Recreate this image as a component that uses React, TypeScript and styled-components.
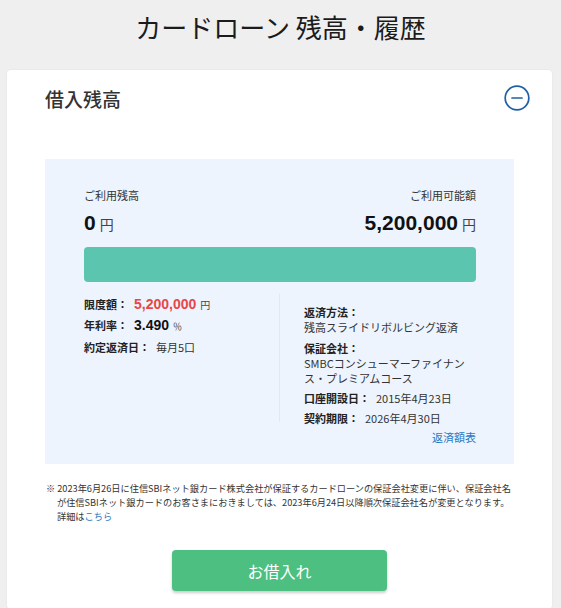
import styled, { createGlobalStyle } from "styled-components";

const GlobalStyle = createGlobalStyle`
  html, body {
    margin: 0;
    padding: 0;
    background: #efefef;
    font-family: "Noto Sans CJK JP", "Noto Sans", sans-serif;
    color: #222;
  }
`;

const Page = styled.div`
  width: 561px;
  min-height: 608px;
`;

const Title = styled.h1`
  margin: 0;
  padding-top: 9px;
  height: 36px;
  line-height: 36px;
  text-align: center;
  font-size: 26px;
  font-weight: 400;
  color: #1b1b1b;
  margin-bottom: 25px;
`;

const Card = styled.section`
  margin: 0 9px 0 7px;
  background: #fff;
  border-radius: 4px;
  box-shadow: 0 0 2px rgba(0, 0, 0, 0.08);
  padding: 0 38px 18px;
`;

const CardHeader = styled.div`
  display: flex;
  align-items: center;
  justify-content: space-between;
  height: 56px;
  margin-right: -16px;
`;

const CardTitle = styled.h2`
  margin: 0;
  font-size: 19px;
  font-weight: 500;
  color: #333;
`;

const ToggleButton = styled.button`
  border: 0;
  background: none;
  padding: 0;
  width: 26px;
  height: 26px;
  cursor: pointer;
  display: flex;
`;

const Panel = styled.div`
  margin-top: 33px;
  background: #edf4fe;
  padding: 28px 38px 20px 39px;
`;

const SummaryRow = styled.div`
  display: flex;
  justify-content: space-between;
`;

const SummaryBlock = styled.div<{ $right?: boolean }>`
  display: flex;
  flex-direction: column;
  align-items: ${(p) => (p.$right ? "flex-end" : "flex-start")};
`;

const SummaryLabel = styled.div`
  font-size: 11px;
  line-height: 16px;
  color: #333;
`;

const Amount = styled.div`
  margin-top: 6px;
  height: 28px;
  display: flex;
  align-items: baseline;
  line-height: 28px;
`;

const Number = styled.span<{ $size: number; $color?: string }>`
  font-family: "Liberation Sans", Arial, sans-serif;
  font-weight: 700;
  font-size: ${(p) => p.$size}px;
  color: ${(p) => p.$color || "#111"};
`;

const Unit = styled.span<{ $size: number }>`
  font-size: ${(p) => p.$size}px;
  color: #444;
  margin-left: 4px;
`;

const Bar = styled.div`
  margin-top: 10px;
  height: 35px;
  border-radius: 4px;
  background: #5bc5b0;
`;

const Details = styled.div`
  display: flex;
  margin-top: 12px;
`;

const LeftCol = styled.div`
  width: 195px;
  height: 128px;
  border-right: 1px solid #e3e8f0;
  display: flex;
  flex-direction: column;
`;

const RightCol = styled.div`
  flex: 1;
  padding-left: 24px;
  padding-top: 11px;
  display: flex;
  flex-direction: column;
`;

const InlineRow = styled.div<{ $gap?: number }>`
  display: flex;
  align-items: baseline;
  line-height: 20px;
  font-size: 11px;
  margin-top: ${(p) => p.$gap || 0}px;
`;

const Label = styled.span`
  font-weight: 700;
  font-size: 11px;
  color: #222;
  margin-right: 6px;
  white-space: nowrap;
`;

const Value = styled.span`
  font-size: 11px;
  color: #333;
`;

const StackItem = styled.div`
  display: flex;
  flex-direction: column;
  line-height: 15px;
  font-size: 11px;
  margin-bottom: 6px;
`;

const StackValue = styled.span`
  font-size: 11px;
  color: #333;
`;

const TableLink = styled.a`
  align-self: flex-end;
  margin-top: 2px;
  line-height: 14px;
  font-size: 11px;
  color: #2a79c1;
  text-decoration: none;
`;

const Note = styled.p`
  margin: 17px -2px 0 1px;
  padding-left: 11px;
  text-indent: -11px;
  font-size: 9.2px;
  line-height: 14px;
  color: #333;
`;

const NoteLink = styled.a`
  color: #2a79c1;
  text-decoration: none;
`;

const ButtonWrap = styled.div`
  display: flex;
  justify-content: center;
  margin-top: 27px;
`;

const PrimaryButton = styled.button`
  width: 215px;
  height: 41px;
  border: 0;
  border-radius: 4px;
  background: #4dbf80;
  color: #fff;
  font-family: inherit;
  font-size: 16px;
  box-shadow: 0 2px 3px rgba(0, 0, 0, 0.2);
  cursor: pointer;
`;

const MinusCircle = () => (
  <svg width="26" height="26" viewBox="0 0 26 26" fill="none">
    <circle cx="13" cy="13" r="11.8" stroke="#1f5fa5" strokeWidth="1.7" />
    <line x1="8" y1="13" x2="18" y2="13" stroke="#1f5fa5" strokeWidth="1.7" strokeLinecap="round" />
  </svg>
);

const App = () => {
  return (
    <Page>
      <GlobalStyle />
      <Title>カードローン 残高・履歴</Title>
      <Card>
        <CardHeader>
          <CardTitle>借入残高</CardTitle>
          <ToggleButton aria-label="閉じる">
            <MinusCircle />
          </ToggleButton>
        </CardHeader>
        <Panel>
          <SummaryRow>
            <SummaryBlock>
              <SummaryLabel>ご利用残高</SummaryLabel>
              <Amount>
                <Number $size={21}>0</Number>
                <Unit $size={14}>円</Unit>
              </Amount>
            </SummaryBlock>
            <SummaryBlock $right>
              <SummaryLabel>ご利用可能額</SummaryLabel>
              <Amount>
                <Number $size={21}>5,200,000</Number>
                <Unit $size={14}>円</Unit>
              </Amount>
            </SummaryBlock>
          </SummaryRow>
          <Bar />
          <Details>
            <LeftCol>
              <InlineRow>
                <Label>限度額：</Label>
                <Number $size={14} $color="#e94646">5,200,000</Number>
                <Unit $size={10}>円</Unit>
              </InlineRow>
              <InlineRow>
                <Label>年利率：</Label>
                <Number $size={14}>3.490</Number>
                <Unit $size={9}>％</Unit>
              </InlineRow>
              <InlineRow>
                <Label>約定返済日：</Label>
                <Value>毎月5口</Value>
              </InlineRow>
            </LeftCol>
            <RightCol>
              <StackItem>
                <Label>返済方法：</Label>
                <StackValue>残高スライドリボルビング返済</StackValue>
              </StackItem>
              <StackItem>
                <Label>保証会社：</Label>
                <StackValue>SMBCコンシューマーファイナンス・プレミアムコース</StackValue>
              </StackItem>
              <InlineRow $gap={-4}>
                <Label>口座開設日：</Label>
                <Value>2015年4月23日</Value>
              </InlineRow>
              <InlineRow>
                <Label>契約期限：</Label>
                <Value>2026年4月30日</Value>
              </InlineRow>
              <TableLink href="#">返済額表</TableLink>
            </RightCol>
          </Details>
        </Panel>
        <Note>
          ※ 2023年6月26日に住信SBIネット銀カード株式会社が保証するカードローンの保証会社変更に伴い、保証会社名が住信SBIネット銀カードのお客さまにおきましては、2023年6月24日以降順次保証会社名が変更となります。
          <br />
          詳細は<NoteLink href="#">こちら</NoteLink>
        </Note>
        <ButtonWrap>
          <PrimaryButton>お借入れ</PrimaryButton>
        </ButtonWrap>
      </Card>
    </Page>
  );
};

export default App;
